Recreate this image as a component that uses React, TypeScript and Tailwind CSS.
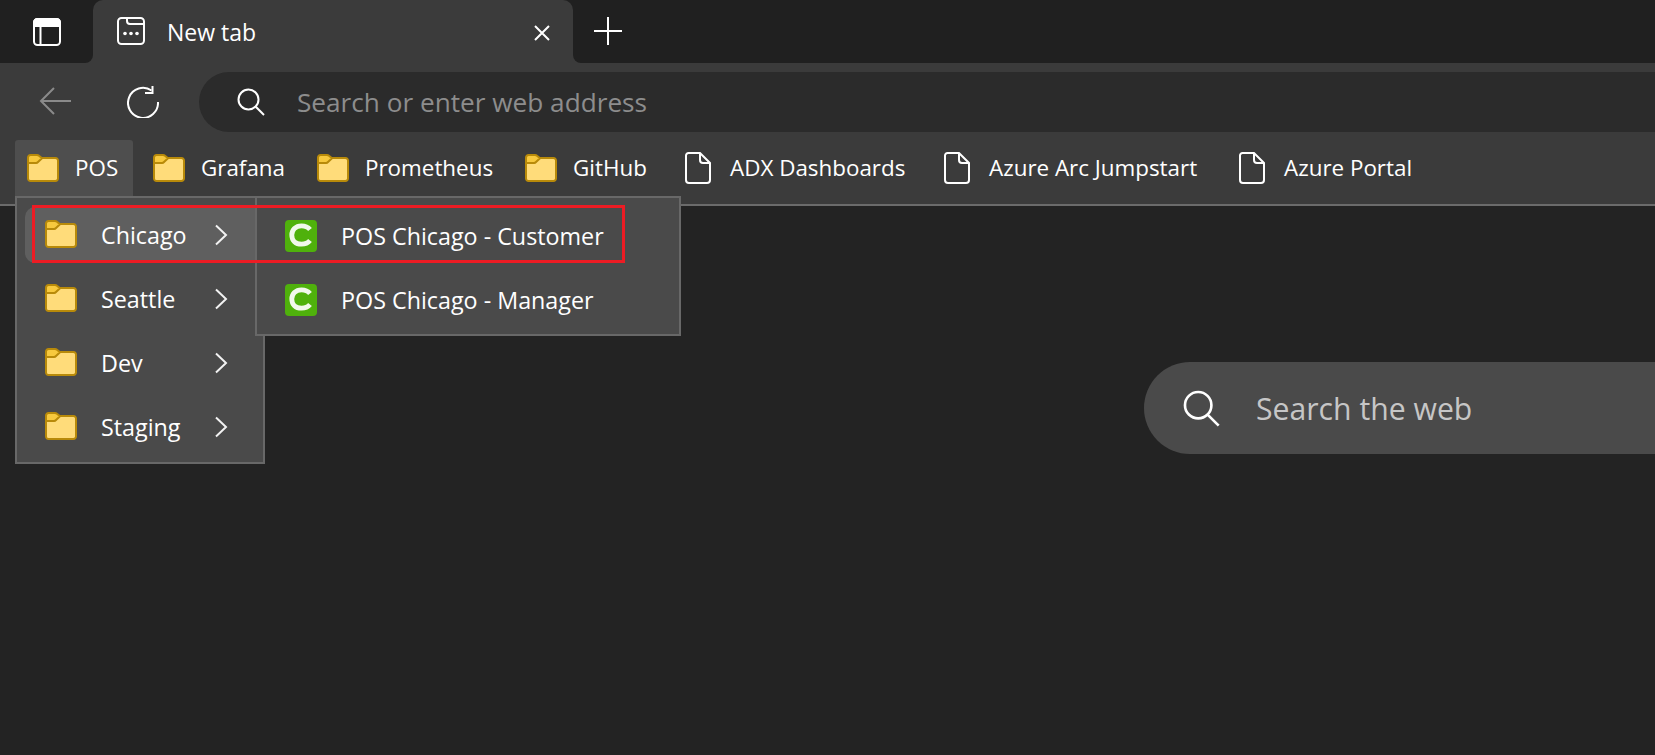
import React from "react";

const FONT = "font-['Open_Sans','Noto_Sans',sans-serif]";

function Folder({ className = "" }: { className?: string }) {
  return (
    <svg width="32" height="28" viewBox="0 0 32 28" className={`shrink-0 ${className}`}>
      <path d="M1 6.5 V24.5 a2.5 2.5 0 0 0 2.5 2.5 H28.5 a2.5 2.5 0 0 0 2.5 -2.5 V6.5 a2.5 2.5 0 0 0 -2.5 -2.5 H3.5 a2.5 2.5 0 0 0 -2.5 2.5 Z" fill="#ffdc7a" stroke="#b88a0a" strokeWidth="2" />
      <path d="M1 9 V3.5 a2.5 2.5 0 0 1 2.5 -2.5 H10 a3 3 0 0 1 2 0.8 L15 4.2 L11 8 a3 3 0 0 1 -2 1 Z" fill="#f7c93e" stroke="#b88a0a" strokeWidth="2" strokeLinejoin="round" />
    </svg>
  );
}

function FileIcon() {
  return (
    <svg width="26" height="32" viewBox="0 0 26 32" className="shrink-0" fill="none" stroke="#ffffff" strokeWidth="2">
      <path d="M3.5 1 H15 L25 11 V28 a3 3 0 0 1 -3 3 H4 a3 3 0 0 1 -3 -3 V3.5 a2.5 2.5 0 0 1 2.5 -2.5 Z" />
      <path d="M15 1 V8 a3 3 0 0 0 3 3 H25" />
    </svg>
  );
}

function Chevron() {
  return (
    <svg width="14" height="22" viewBox="0 0 14 22" fill="none" stroke="#f2f2f2" strokeWidth="2">
      <path d="M2 1.5 L12 11 L2 20.5" />
    </svg>
  );
}

function CLogo() {
  return (
    <svg width="32" height="32" viewBox="0 0 32 32" className="shrink-0">
      <rect width="32" height="32" rx="4" fill="#4fb10c" />
      <path d="M25 9.5 C23 7 20 5.8 16.5 5.8 C10.5 5.8 6.8 10 6.8 15 C6.8 20.5 10.5 24.2 16.5 24.2 C20 24.2 23 23 25 20.5" fill="none" stroke="#ffffff" strokeWidth="4.8" opacity="0.92" className="blur-[0.5px]" />
    </svg>
  );
}

function SearchIcon({ size }: { size: number }) {
  return (
    <svg width={size} height={size} viewBox="0 0 28 28" fill="none" stroke="#ffffff" strokeWidth="2" className="shrink-0">
      <circle cx="11.5" cy="11.5" r="10" />
      <path d="M18.8 18.8 L27 27" />
    </svg>
  );
}

const bookmarks = [
  { label: "POS", w: "w-[118px] bg-[#4e4e4e]", file: false },
  { label: "Grafana", w: "w-[156px]", file: false },
  { label: "Prometheus", w: "w-[200px]", file: false },
  { label: "GitHub", w: "w-[148px]", file: false },
  { label: "ADX Dashboards", w: "w-[251px]", file: true },
  { label: "Azure Arc Jumpstart", w: "w-[287px]", file: true },
  { label: "Azure Portal", w: "w-[200px]", file: true },
];

const folders = ["Chicago", "Seattle", "Dev", "Staging"];
const links = ["POS Chicago - Customer", "POS Chicago - Manager"];

export default function App() {
  return (
    <div className={`${FONT} relative h-[755px] w-full overflow-hidden bg-[#232323] text-white`}>
      {/* tab strip */}
      <div className="flex h-[63px] bg-[#3b3b3b]">
        <div className="flex w-[93px] items-start rounded-br-[8px] bg-[#202020] pl-[33px] pt-[18px]">
          <svg width="28" height="28" viewBox="0 0 28 28" fill="none" stroke="#ffffff" strokeWidth="2">
            <rect x="1" y="1" width="26" height="26" rx="3.5" />
            <path d="M1 8 V4.5 a3.5 3.5 0 0 1 3.5 -3.5 H23.5 a3.5 3.5 0 0 1 3.5 3.5 V8 Z" fill="#ffffff" />
            <path d="M7.5 8 V27" />
          </svg>
        </div>
        <div className="w-[480px] bg-[#202020]">
          <div className="flex h-full items-center rounded-t-[10px] bg-[#3b3b3b] pl-[24px] pr-[22px]">
            <svg width="28" height="28" viewBox="0 0 28 28" fill="none" stroke="#ffffff" strokeWidth="2" className="shrink-0 -mt-[2px]">
              <rect x="1" y="1" width="26" height="26" rx="3.5" />
              <path d="M10 1 V4 a3 3 0 0 0 3 3 H27" />
              <circle cx="8" cy="16.5" r="1.8" fill="#ffffff" stroke="none" />
              <circle cx="14" cy="16.5" r="1.8" fill="#ffffff" stroke="none" />
              <circle cx="20" cy="16.5" r="1.8" fill="#ffffff" stroke="none" />
            </svg>
            <span className="ml-[22px] mt-[2px] flex-1 text-[23px] leading-none">New tab</span>
            <svg width="18" height="18" viewBox="0 0 18 18" fill="none" stroke="#ffffff" strokeWidth="2" className="mt-[2px]">
              <path d="M2 2 L16 16 M16 2 L2 16" />
            </svg>
          </div>
        </div>
        <div className="flex flex-1 items-start rounded-bl-[8px] bg-[#202020] pl-[21px] pt-[17px]">
          <svg width="28" height="28" viewBox="0 0 28 28" fill="none" stroke="#ffffff" strokeWidth="2">
            <path d="M14 0 V28 M0 14 H28" />
          </svg>
        </div>
      </div>

      {/* toolbar */}
      <div className="flex h-[69px] items-start bg-[#3b3b3b] pt-[9px]">
        <svg width="32" height="28" viewBox="0 0 32 28" fill="none" stroke="#8a8a8a" strokeWidth="2" className="ml-[39px] mt-[15px] shrink-0">
          <path d="M32 14 H2 M15 1 L2 14 L15 27" />
        </svg>
        <svg width="32" height="32" viewBox="0 0 32 32" fill="none" stroke="#ffffff" strokeWidth="2" className="ml-[56px] mt-[14px] shrink-0">
          <path d="M24.5 4.5 A15 15 0 1 0 31 16" />
          <path d="M25.5 0 V7 H18" />
        </svg>
        <div className="ml-[40px] flex h-[60px] flex-1 items-center rounded-l-[30px] bg-[#2b2b2b] pl-[38px]">
          <SearchIcon size={28} />
          <span className="ml-[32px] text-[26.2px] leading-none text-[#8d8d8d]">Search or enter web address</span>
        </div>
      </div>

      {/* bookmarks */}
      <div className="flex h-[74px] gap-2 border-b-2 border-[#6b6b6b] bg-[#3b3b3b] pl-[15px] pt-[8px]">
        {bookmarks.map((b) => (
          <div key={b.label} className={`flex h-[56px] items-center rounded-t-[3px] ${b.w} ${b.file ? "pl-[16px]" : "pl-[12px]"}`}>
            {b.file ? <FileIcon /> : <Folder />}
            <span className={`${b.file ? "ml-[19px]" : "ml-[16px]"} whitespace-nowrap text-[22.4px] leading-none`}>{b.label}</span>
          </div>
        ))}
      </div>

      {/* page */}
      <div className="flex pl-[1144px] pt-[156px]">
        <div className="flex h-[92px] flex-1 items-center rounded-l-[46px] bg-[#4a4a4a] pl-[39px]">
          <SearchIcon size={37} />
          <span className="ml-[36px] mt-[3px] text-[30.2px] leading-none text-[#c6c6c6]">Search the web</span>
        </div>
      </div>

      {/* folder menu */}
      <div className="absolute left-[15px] top-[196px] flex h-[268px] w-[250px] flex-col gap-[4px] border-2 border-[#686868] bg-[#4a4a4a] pl-[8px] pt-[9px]">
        {folders.map((f, i) => (
          <div key={f} className={`flex shrink-0 items-center rounded-l-[10px] pl-[20px] ${i === 0 ? "h-[56px] bg-[#5f5f5f]" : "-mb-[4px] h-[64px]"}`}>
            <Folder className="-mt-[2px]" />
            <span className="ml-[24px] mt-[1px] w-[113px] text-[23.3px] leading-none">{f}</span>
            <Chevron />
          </div>
        ))}
      </div>

      {/* sub menu */}
      <div className="absolute left-[255px] top-[196px] flex h-[140px] w-[426px] flex-col border-2 border-[#686868] bg-[#4a4a4a] pl-[28px] pt-[6px]">
        {links.map((l) => (
          <div key={l} className="flex h-[64px] items-center">
            <CLogo />
            <span className="ml-[24px] mt-[1px] whitespace-nowrap text-[23.3px] leading-none">{l}</span>
          </div>
        ))}
      </div>

      {/* annotation */}
      <div className="absolute left-[32px] top-[205px] h-[58px] w-[593px] border-[3px] border-[#ed1c24]" />
    </div>
  );
}
